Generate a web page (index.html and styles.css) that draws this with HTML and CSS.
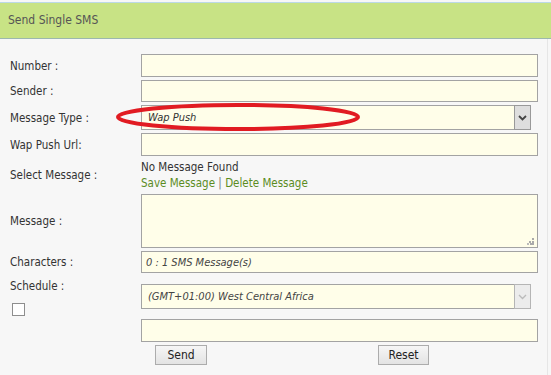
FILE: index.html
```html
<!DOCTYPE html>
<html>
<head>
<meta charset="utf-8">
<link rel="stylesheet" href="styles.css">
</head>
<body>
<div class="page">
  <div class="header">Send Single SMS</div>
  <div class="form">
    <div class="label">Number :</div>
    <div class="field"><div class="input"></div></div>

    <div class="label">Sender :</div>
    <div class="field"><div class="input short"></div></div>

    <div class="label">Message Type :</div>
    <div class="field">
      <div class="select"><span class="sel-text">Wap Push</span><span class="arrow"><svg width="9" height="6" viewBox="0 0 9 6"><path d="M1 1 L4.5 4.5 L8 1" fill="none" stroke="#444" stroke-width="1.8"/></svg></span></div>
    </div>

    <div class="label">Wap Push Url:</div>
    <div class="field"><div class="input"></div></div>

    <div class="label">Select Message :</div>
    <div class="field msgblock">
      <div class="line">No Message Found</div>
      <div class="line"><a class="link">Save Message</a> <span class="sep">|</span> <a class="link">Delete Message</a></div>
    </div>

    <div class="label">Message :</div>
    <div class="field"><div class="textarea"><svg class="grip" width="7" height="7" viewBox="0 0 7 7"><rect x="5" y="0" width="2" height="2" fill="#aaa"/><rect x="2" y="3" width="2" height="2" fill="#aaa"/><rect x="5" y="3" width="2" height="2" fill="#aaa"/><rect x="0" y="5" width="2" height="2" fill="#bbb"/><rect x="3" y="5" width="2" height="2" fill="#aaa"/><rect x="5" y="5" width="2" height="2" fill="#aaa"/></svg></div></div>

    <div class="label">Characters :</div>
    <div class="field"><div class="input short"><span class="in-text">0 : 1 SMS Message(s)</span></div></div>

    <div class="label sched">
      <div class="sched-text">Schedule :</div>
      <div class="checkbox"></div>
    </div>
    <div class="field sched-field">
      <div class="select disabled"><span class="sel-text">(GMT+01:00) West Central Africa</span><span class="arrow"><svg width="9" height="6" viewBox="0 0 9 6"><path d="M1 1 L4.5 4.5 L8 1" fill="none" stroke="#bbb" stroke-width="1.4"/></svg></span></div>
      <div class="input date"></div>
    </div>

    <div class="label"></div>
    <div class="field buttons">
      <button class="btn">Send</button>
      <button class="btn reset">Reset</button>
    </div>
  </div>
</div>
<svg class="mark" width="246" height="31" viewBox="0 0 246 31"><ellipse cx="123" cy="15" rx="120" ry="12" fill="none" stroke="#e11b22" stroke-width="4"/></svg>
</body>
</html>
```
FILE: styles.css
```css
html, body {
  margin: 0;
  padding: 0;
}
body {
  background: #f7f7f7;
  font-family: "DejaVu Sans Condensed", "DejaVu Sans", sans-serif;
  font-size: 11.5px;
  color: #333;
  position: relative;
  width: 551px;
  height: 375px;
  overflow: hidden;
}
.page {
  padding-top: 2px;
}
.header {
  height: 35px;
  background: #c8e385;
  border-top: 1px solid #bcd9e6;
  border-bottom: 1px solid #9cb8ae;
  color: #555;
  font-size: 12px;
  line-height: 35px;
  padding-left: 8px;
}
.form {
  display: grid;
  grid-template-columns: 141px 397px;
  row-gap: 3px;
  align-items: center;
  align-content: start;
  padding-top: 15px;
  border-right: 1px solid #e6e6e6;
  width: 548px;
  box-sizing: border-box;
  height: 336px;
}
.label {
  padding-left: 10px;
  color: #333;
}
.input {
  height: 23px;
  box-sizing: border-box;
  background: #fffee9;
  border: 1px solid #a3a3a3;
  display: flex;
  align-items: center;
}
.input.short {
  height: 22px;
}
.in-text {
  font-style: italic;
  color: #444;
  padding-left: 4px;
  font-size: 11px;
}
.select {
  width: 390px;
  height: 25px;
  box-sizing: border-box;
  background: #fffee9;
  border: 1px solid #a3a3a3;
  border-right: none;
  display: flex;
  align-items: center;
}
.sel-text {
  flex: 1;
  font-style: italic;
  padding-left: 6px;
  color: #333;
  font-size: 11px;
}
.arrow {
  width: 17px;
  height: 25px;
  margin-top: -1px;
  margin-bottom: -1px;
  box-sizing: border-box;
  border: 1px solid #999;
  background: #dedede;
  display: flex;
  align-items: center;
  justify-content: center;
}
.select.disabled .arrow {
  background: #ececec;
  border-color: #b5b5b5;
}
.select.disabled .sel-text {
  color: #444;
}
.msgblock .line {
  line-height: 16px;
}
.link {
  color: #5b8c1e;
}
.sep {
  color: #777;
}
.textarea {
  height: 54px;
  box-sizing: border-box;
  background: #fffee9;
  border: 1px solid #a3a3a3;
  display: flex;
  justify-content: flex-end;
  align-items: flex-end;
  padding: 0 3px 2px 0;
}
.sched {
  align-self: start;
  padding-top: 2px;
}
.sched-text {
  line-height: 16px;
}
.checkbox {
  width: 13px;
  height: 13px;
  box-sizing: border-box;
  border: 1px solid #8e8e8e;
  background: #fff;
  margin-top: 9px;
  margin-left: 2px;
}
.sched-field {
  align-self: start;
}
.sched-field .select {
  margin-top: 8px;
}
.input.date {
  margin-top: 10px;
}
.buttons {
  display: flex;
  padding-left: 14px;
  gap: 171px;
}
.btn {
  width: 52px;
  height: 20px;
  padding: 0;
  font-family: "DejaVu Sans Condensed", "DejaVu Sans", sans-serif;
  font-size: 12px;
  color: #222;
  background: linear-gradient(#f6f6f6, #e3e3e3);
  border: 1px solid #acacac;
  border-radius: 0;
}
.btn.reset {
  width: 51px;
}
.mark {
  position: absolute;
  left: 115px;
  top: 102px;
}
```
